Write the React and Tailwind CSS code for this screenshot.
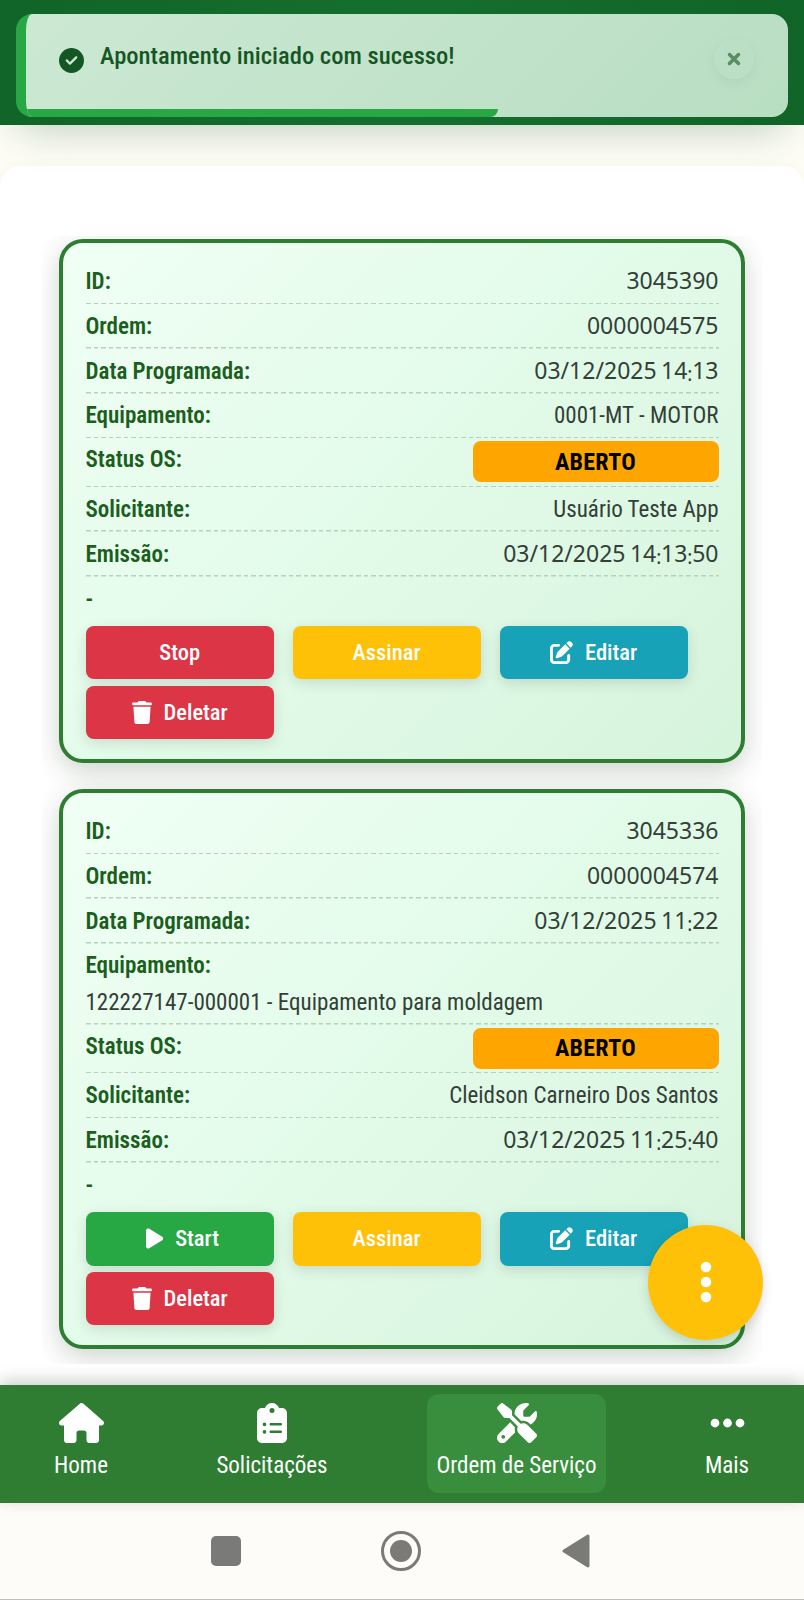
import React from 'react';
import {
    FaCircleCheck, FaClipboardList, FaEllipsis, FaEllipsisVertical, FaHouse,
    FaPenToSquare, FaPlay, FaScrewdriverWrench, FaTrash, FaXmark,
} from 'react-icons/fa6';

const ORDERS = [
    {
        id: '3045390',
        ordem: '0000004575',
        programada: '03/12/2025 14:13',
        equipamento: '0001-MT - MOTOR',
        solicitante: 'Usuário Teste App',
        emissao: '03/12/2025 14:13:50',
        running: true,
    },
    {
        id: '3045336',
        ordem: '0000004574',
        programada: '03/12/2025 11:22',
        equipamento: '122227147-000001 - Equipamento para moldagem',
        solicitante: 'Cleidson Carneiro Dos Santos',
        emissao: '03/12/2025 11:25:40',
        running: false,
    },
];

const NAV_ITEMS = [
    { label: 'Home', icon: FaHouse, box: 'w-[162px]', iconBox: 'w-[45px]' },
    { label: 'Solicitações', icon: FaClipboardList, box: 'w-[220px]', iconBox: 'w-[30px]' },
    { label: 'Ordem de Serviço', icon: FaScrewdriverWrench, box: 'ml-[45px] w-[179px]', iconBox: 'w-[40px]', active: true },
    { label: 'Mais', icon: FaEllipsis, box: 'ml-[46px] w-[150px]', iconBox: 'w-[35px]' },
];

const DASHED = 'bg-[repeating-linear-gradient(90deg,#b7d1be_0_4.5px,transparent_4.5px_7.5px)] bg-[length:100%_1.5px] bg-bottom bg-no-repeat';

/* ── Digits with the small, low colon used in times ── */
const Digits = ({ text }) => (
    <span className="font-['Noto_Sans',sans-serif] text-[23px] [word-spacing:-1.5px] font-stretch-normal">
        {text.split(':').map((part, i) => (
            <React.Fragment key={i}>
                {i > 0 && <span className="relative top-[2px] inline-flex w-[4.8px] justify-center text-[19px] leading-none">:</span>}
                {part}
            </React.Fragment>
        ))}
    </span>
);

/* ── One label / value line ── */
const Row = ({ label, value, numeric, stacked }) => (
    <div className={`${DASHED} ${stacked ? 'h-[81px]' : 'flex h-[44.75px] items-center justify-between'}`}>
        <div className={`font-semibold text-[#1b5e20] ${stacked ? 'leading-[43px]' : 'pt-[1.5px]'}`}>{label}</div>
        <div className={`text-[#333f37] ${stacked ? 'leading-[31px]' : numeric ? '' : 'pt-[1.5px]'}`}>
            {numeric ? <Digits text={value} /> : value}
        </div>
    </div>
);

const ActionButton = ({ icon: Icon, iconBox = '', color, children }) => (
    <button
        type="button"
        className={`flex h-[53.25px] w-[188.25px] items-center justify-center gap-3 rounded-lg text-[22.5px] font-medium text-white shadow-[0_4px_14px_rgba(0,0,0,0.12)] ${color}`}
    >
        {Icon && <Icon className={`h-[23px] ${iconBox}`} />}
        <span>{children}</span>
    </button>
);

const OrderCard = ({ order }) => (
    <div className="rounded-[24px] border-4 border-[#2e7d32] bg-linear-135 from-[#f0fff4] via-[#e2fbe9] to-[#d6f3dc] px-[22.5px] pt-4 pb-5 shadow-[0_8px_28px_rgba(0,40,10,0.2)]">
        <Row label="ID:" value={order.id} numeric />
        <Row label="Ordem:" value={order.ordem} numeric />
        <Row label="Data Programada:" value={order.programada} numeric />
        <Row label="Equipamento:" value={order.equipamento} stacked={order.equipamento.length > 30} />
        <div className={`flex h-[48.75px] justify-between pt-[3px] ${DASHED}`}>
            <div className="pt-1 font-semibold leading-[30px] text-[#1b5e20]">Status OS:</div>
            <div className="flex h-[41px] w-[246px] items-center justify-center rounded-lg bg-[#ffa500] text-[24px] font-bold tracking-[0.3px] text-black">ABERTO</div>
        </div>
        <Row label="Solicitante:" value={order.solicitante} />
        <Row label="Emissão:" value={order.emissao} numeric />
        <div className="h-[49.5px] font-semibold leading-[45px] text-[#1b5e20]">-</div>
        <div className="flex flex-wrap gap-x-[18.75px] gap-y-[6.5px]">
            {order.running
                ? <ActionButton color="bg-[#dc3545]">Stop</ActionButton>
                : <ActionButton color="bg-[#28a745]" icon={FaPlay} iconBox="w-[17.25px] ml-[5.75px]">Start</ActionButton>}
            <ActionButton color="bg-[#ffc107]">Assinar</ActionButton>
            <ActionButton color="bg-[#17a2b8]" icon={FaPenToSquare} iconBox="w-[23px]">Editar</ActionButton>
            <ActionButton color="bg-[#dc3545]" icon={FaTrash} iconBox="w-[20px]">Deletar</ActionButton>
        </div>
    </div>
);

const Toast = () => (
    <div className="absolute top-[13.5px] left-4 z-20 h-[103.5px] w-[771.5px] overflow-hidden rounded-2xl border-l-10 border-[#28a745] bg-linear-135 from-[#cce8d3] to-[#b8dec2]">
        <div className="flex items-start pt-[25px] pl-[33px]">
            <FaCircleCheck className="mt-[9.5px] size-[25px] text-[#155724]" />
            <span className="ml-[16px] pt-px text-[24.6px] font-medium leading-[32px] text-[#155724]">Apontamento iniciado com sucesso!</span>
            <button type="button" className="mr-[33.5px] ml-auto flex size-10 items-center justify-center rounded-full shadow-[0_4px_14px_rgba(0,0,0,0.05)]">
                <FaXmark className="size-[18px] stroke-[#5a8c66] stroke-[36] text-[#5a8c66]" />
            </button>
        </div>
        <div className="absolute bottom-0 left-0 h-[8.5px] w-[472px] rounded-br-lg bg-[#28a745]" />
    </div>
);

const App = () => {
    return (
        <div className="relative flex h-[1600px] w-[804px] flex-col overflow-hidden bg-[#fdfdf6] font-['Roboto_Condensed',Roboto,sans-serif] text-[23px] font-stretch-[75%]">
            <header className="z-10 h-[124.5px] shrink-0 bg-linear-90 from-[#116428] via-[#146f2e] to-[#116428]" />
            <div className="absolute top-[13px] left-[16px] h-[104px] w-[771px] rounded-2xl shadow-[0_12px_40px_rgba(0,60,20,0.25)]" />

            <main className="mt-[41.5px] h-[1218.5px] shrink-0 rounded-t-[20px] bg-white px-[42px] pt-[70.25px] shadow-[0_0_12px_rgba(0,0,0,0.03)]">
                {/* clips the card shadows at the list's edge */}
                <div className="flex h-[1128px] flex-col gap-[26.25px] overflow-hidden rounded-2xl px-[17px] pt-[3px]">
                    {ORDERS.map((order) => <OrderCard key={order.id} order={order} />)}
                </div>
            </main>

            <nav className="z-10 flex h-[118px] shrink-0 items-start bg-[#2e7d32] pt-[9.5px] text-white shadow-[0_-4px_16px_rgba(0,0,0,0.2)]">
                {NAV_ITEMS.map(({ label, icon: Icon, box, iconBox, active }) => (
                    <div key={label} className={`flex h-[99px] flex-col items-center rounded-xl pt-[9px] ${box} ${active ? 'bg-[#388e3c]' : ''}`}>
                        <Icon className={`h-[40px] ${iconBox}`} />
                        <span className="mt-[7.5px] leading-[30px]">{label}</span>
                    </div>
                ))}
            </nav>

            <footer className="flex grow items-center border-b border-[#bdbdbb] bg-[#fefcf8] pl-[211px]">
                <div className="size-[29.5px] rounded-[5px] bg-[#7a7a78]" />
                <div className="ml-[140.5px] flex size-[40px] items-center justify-center rounded-full border-[3.5px] border-[#7a7a78]">
                    <div className="size-[22px] rounded-full bg-[#7a7a78]" />
                </div>
                <svg viewBox="0 0 28 34" className="ml-[141px] h-[34px] w-[28px] text-[#7a7a78]">
                    <path d="M26 2 L2 17 L26 32 Z" fill="currentColor" stroke="currentColor" strokeWidth="3" strokeLinejoin="round" />
                </svg>
            </footer>

            <Toast />
            <button type="button" className="absolute top-[1224.5px] left-[648.25px] z-20 flex size-[115px] items-center justify-center rounded-full bg-[#ffc107] text-white shadow-[0_4px_12px_rgba(0,0,0,0.15)]">
                <FaEllipsisVertical className="size-[48px]" />
            </button>
        </div>
    );
};

export default App;
